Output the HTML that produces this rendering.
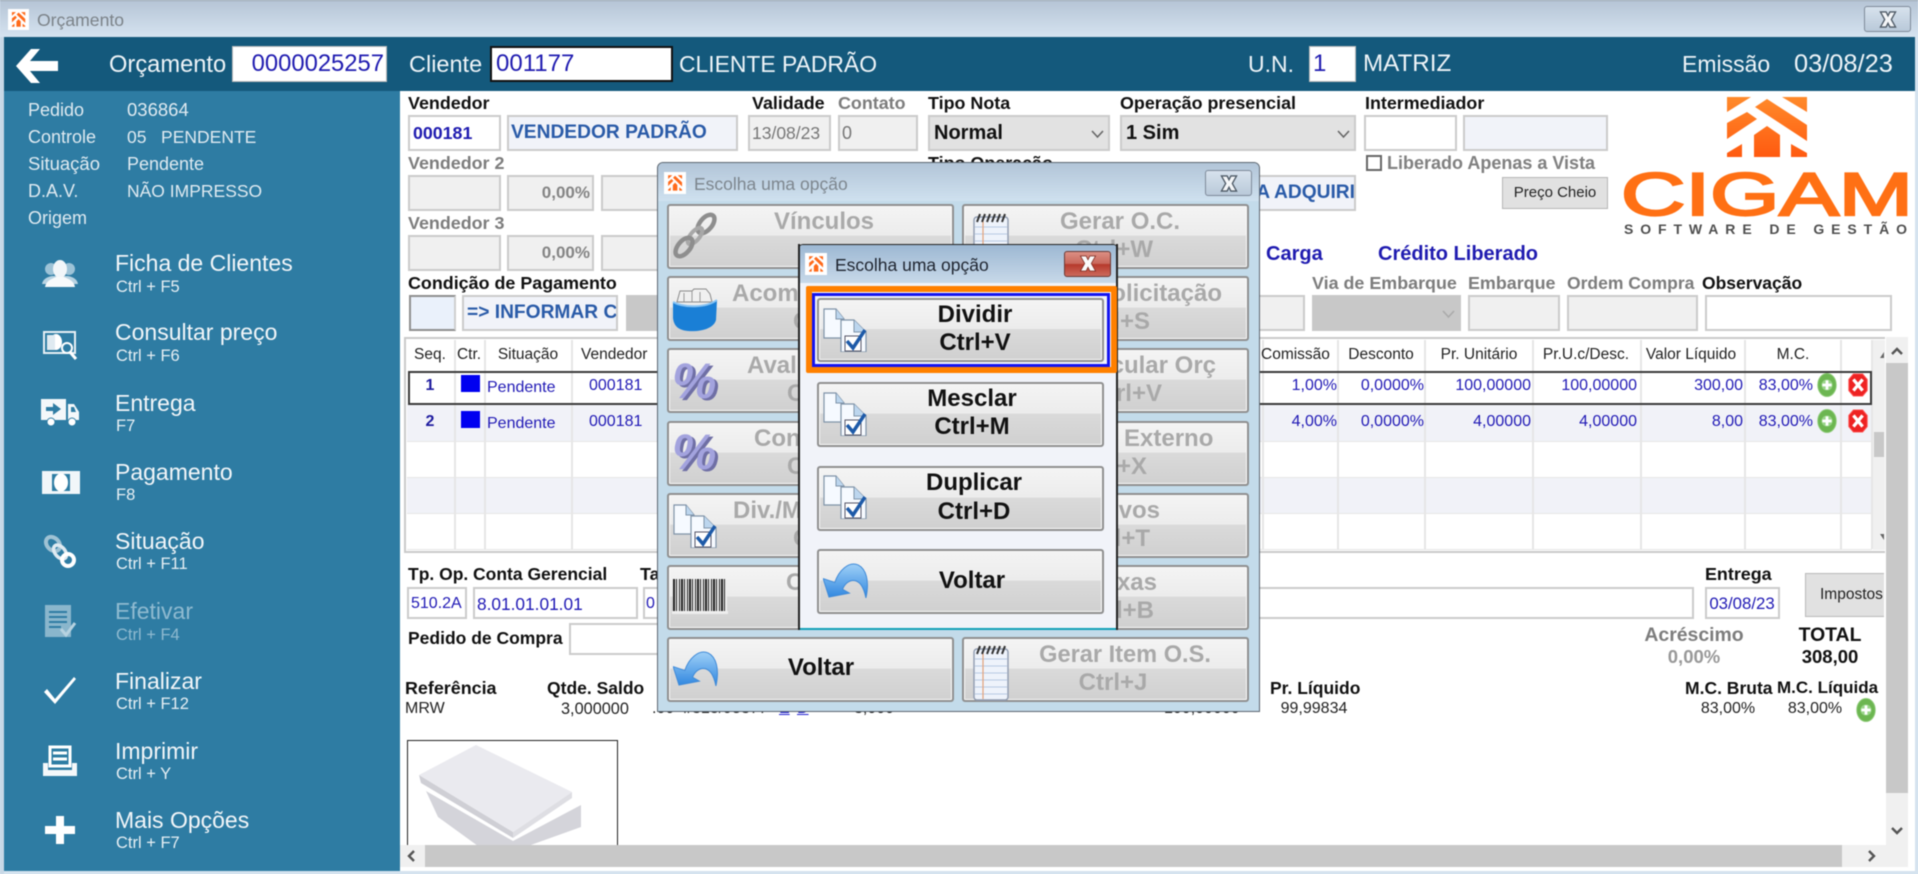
<!DOCTYPE html>
<html lang="pt"><head><meta charset="utf-8"><title>Orçamento</title>
<style>
html,body{margin:0;padding:0;width:1918px;height:874px;overflow:hidden;background:#d5e3ef}
body{font-family:"Liberation Sans",Arial,sans-serif;position:relative}
#w{position:absolute;left:0;top:0;width:1918px;height:874px;overflow:hidden;filter:blur(.45px)}
.a{position:absolute}
.t{position:absolute;white-space:nowrap;line-height:20px;height:20px}
.c{transform:translateX(-50%)}
.r{text-align:right;transform:translateX(-100%)}
.w{color:#eef4f8}
.s18{font-size:18px;color:#dfeaf1}
.m{font-size:23px;color:#f2f6f9}
.k{font-size:16.5px;color:#e6eff4}
.l{font-size:17.9px;font-weight:bold;color:#111}
.n{font-size:17.5px}
.g{color:#7d7d7d}
.b{position:absolute;box-sizing:border-box;border:2px solid #cbcbcb;background:#fff}
.d{background:#f0f0f0}
.e{background:#f1f3f9}
.v{font-size:16px;color:#2019b5}
.h{font-size:15.5px;color:#222}
.vl{position:absolute;width:2px;background:#e6e6e6;top:340px;height:209px}
.btn{position:absolute;box-sizing:border-box;border:2px solid #8f8f8f;border-radius:3px;box-shadow:inset 0 0 0 1px #fafafa;background:linear-gradient(#f4f4f4 0,#ececec 48%,#dadada 49%,#d0d0d0 100%)}
.x{font-size:24px;font-weight:bold;color:#a9a9a9;line-height:28px;height:28px}
.y{font-size:24px;font-weight:bold;color:#111;line-height:28px;height:28px}
svg{position:absolute;overflow:visible}
</style></head><body><div id="w">

<svg width="0" height="0" style="left:0;top:0">
<defs>
<linearGradient id="org" x1="0" y1="0" x2="0" y2="1"><stop offset="0" stop-color="#ff8a2a"/><stop offset="1" stop-color="#ff5a10"/></linearGradient>
<linearGradient id="blu" x1="0" y1="0" x2="0" y2="1"><stop offset="0" stop-color="#9fd0f7"/><stop offset="1" stop-color="#2f86df"/></linearGradient>
<symbol id="ic" viewBox="0 0 24 24"><rect x="0" y="0" width="24" height="24" fill="#fff"/><g transform="translate(4.5 3.5) scale(.19 .28)" fill="#ff6a1a"><path d="M0 0H24L0 15ZM55 0H80V15ZM0 26 20 15 30 22 0 42ZM28 10 40 2 80 28V44ZM40 29 53 38V60H27V38ZM0 60H15V47L0 56ZM64 47 80 56V60H64Z"/></g></symbol>
<symbol id="xx" viewBox="0 0 20 18"><path d="M2 1H8L10 5 12 1H18L13.5 9 18 17H12L10 13 8 17H2L6.5 9Z" fill="#f4f6f8" stroke="#4e5a66" stroke-width="1.4"/></symbol>
<symbol id="xw" viewBox="0 0 20 18"><path d="M2 1H8L10 5 12 1H18L13.5 9 18 17H12L10 13 8 17H2L6.5 9Z" fill="#fafafa" stroke="#7a2a20" stroke-width=".8"/></symbol>
<symbol id="doc" viewBox="0 0 44 44">
<path d="M1 1H13L21 11V30H1Z" fill="#f6faff" stroke="#7f93a8" stroke-width="1.2"/><path d="M13 1V11H21" fill="#bcd6ee" stroke="#7f93a8"/>
<path d="M18 12H31L43 24V44H18Z" fill="#f6faff" stroke="#7f93a8" stroke-width="1.2"/><path d="M31 12V24H43" fill="#bcd6ee" stroke="#7f93a8"/>
<rect x="22" y="28" width="16" height="15" fill="#fff" stroke="#556" stroke-width="1"/><path d="M24 33 30 40 42 22" fill="none" stroke="#1d5aa8" stroke-width="3.5"/></symbol>
<symbol id="und" viewBox="0 0 46 36"><path d="M0 16 12 20C16 8 26-2 36 2 44 6 48 18 44 36 42 26 38 18 31 18 26 18 22 22 20 27L27 31 6 35Z" fill="url(#blu)" stroke="#3f8ad8" stroke-width="1"/></symbol>
<symbol id="note" viewBox="0 0 36 56"><rect x="1" y="4" width="34" height="51" rx="3" fill="#eef3fb" stroke="#8f9bb0" stroke-width="1.4"/><path d="M2 14H34M2 21H34M2 28H34M2 35H34M2 42H34M2 49H34" stroke="#b7c8e2"/><path d="M10 6V54" stroke="#e3a27a" stroke-width="1.2"/><path d="M4 9 7 1M9 9 12 1M14 9 17 1M19 9 22 1M24 9 27 1M29 9 32 1" stroke="#333" stroke-width="2"/></symbol>
<symbol id="pl" viewBox="0 0 22 26"><ellipse cx="11" cy="13" rx="10" ry="12.5" fill="#6cb651" stroke="#8ecb78"/><circle cx="11" cy="13" r="6" fill="#9ad58a"/><path d="M11 8V18M6 13H16" stroke="#fff" stroke-width="3"/></symbol>
<symbol id="rd" viewBox="0 0 22 26"><path d="M6 1H16L21 7V19L16 25H6L1 19V7Z" fill="#ee2222" stroke="#f55"/><path d="M6 7 16 19M16 7 6 19" stroke="#fff" stroke-width="3.5"/></symbol>
</defs></svg>

<!-- title bar -->
<div class="a" style="left:0;top:0;width:1918px;height:37px;background:linear-gradient(#b6c5d6,#d5e3f0);border-top:1px solid #9aa5b0;box-sizing:border-box"></div>
<svg style="left:8px;top:9px" width="21" height="21"><use href="#ic" width="21" height="21"/></svg>
<div class="t" style="left:37px;top:10px;font-size:17.6px;color:#7b8288">Orçamento</div>
<div class="a" style="left:1864px;top:6px;width:47px;height:26px;box-sizing:border-box;border:1px solid #7e8a99;border-radius:3px;background:linear-gradient(#d7e2ed,#b9c9d9)"></div>
<svg style="left:1878px;top:11px" width="20" height="17"><use href="#xx" width="20" height="17"/></svg>

<!-- frame -->
<div class="a" style="left:0;top:37px;width:4px;height:837px;background:#c8d8e6"></div>
<!-- header -->
<div class="a" style="left:4px;top:37px;width:1911px;height:54px;background:#14597c"></div>
<svg style="left:16px;top:49px" width="42" height="34" viewBox="0 0 42 34"><path d="M0 17 15 0H24L14 12H42V22H14L24 34H15Z" fill="#fff"/></svg>
<div class="t w" style="left:109px;top:55px;font-size:23.7px">Orçamento</div>
<div class="a" style="left:232px;top:46px;width:155px;height:36px;background:#fff;border:1px solid #bbb;box-sizing:border-box"></div>
<div class="t r" style="left:384px;top:54px;font-size:23.8px;color:#1f1bb0">0000025257</div>
<div class="t w" style="left:409px;top:54px;font-size:23.5px">Cliente</div>
<div class="a" style="left:490px;top:46px;width:183px;height:36px;background:#fff;border:2px solid #111;box-sizing:border-box"></div>
<div class="t" style="left:496px;top:54px;font-size:24px;color:#1f1bb0">001177</div>
<div class="t w" style="left:679px;top:54px;font-size:22.9px">CLIENTE PADRÃO</div>
<div class="t w" style="left:1248px;top:54px;font-size:23px">U.N.</div>
<div class="a" style="left:1309px;top:46px;width:47px;height:36px;background:#fff;border:1px solid #bbb;box-sizing:border-box"></div>
<div class="t" style="left:1313px;top:54px;font-size:24px;color:#1f1bb0">1</div>
<div class="t w" style="left:1363px;top:54px;font-size:24.2px">MATRIZ</div>
<div class="t w" style="left:1682px;top:54px;font-size:23px">Emissão</div>
<div class="t w" style="left:1794px;top:54px;font-size:25.4px">03/08/23</div>

<!-- sidebar -->
<div class="a" style="left:4px;top:91px;width:396px;height:780px;background:#2e7ca3"></div>
<div class="t s18" style="left:28px;top:100px">Pedido</div><div class="t s18" style="left:127px;top:100px;font-size:18.5px">036864</div>
<div class="t s18" style="left:28px;top:127px">Controle</div><div class="t s18" style="left:127px;top:127px;font-size:17.5px">05 &nbsp; PENDENTE</div>
<div class="t s18" style="left:28px;top:154px;font-size:18.5px">Situação</div><div class="t s18" style="left:127px;top:154px">Pendente</div>
<div class="t s18" style="left:28px;top:181px">D.A.V.</div><div class="t s18" style="left:127px;top:181px;font-size:17.5px">NÃO IMPRESSO</div>
<div class="t s18" style="left:28px;top:208px">Origem</div>

<div class="t m" style="left:115px;top:253px">Ficha de Clientes</div><div class="t k" style="left:116px;top:277px">Ctrl + F5</div>
<div class="t m" style="left:115px;top:322px">Consultar preço</div><div class="t k" style="left:116px;top:346px">Ctrl + F6</div>
<div class="t m" style="left:115px;top:393px">Entrega</div><div class="t k" style="left:116px;top:416px">F7</div>
<div class="t m" style="left:115px;top:462px">Pagamento</div><div class="t k" style="left:116px;top:485px">F8</div>
<div class="t m" style="left:115px;top:531px">Situação</div><div class="t k" style="left:116px;top:554px">Ctrl + F11</div>
<div class="t m" style="left:115px;top:601px;color:#8fbad0">Efetivar</div><div class="t k" style="left:116px;top:625px;color:#8fbad0">Ctrl + F4</div>
<div class="t m" style="left:115px;top:671px">Finalizar</div><div class="t k" style="left:116px;top:694px">Ctrl + F12</div>
<div class="t m" style="left:115px;top:741px">Imprimir</div><div class="t k" style="left:116px;top:764px">Ctrl + Y</div>
<div class="t m" style="left:115px;top:810px">Mais Opções</div><div class="t k" style="left:116px;top:833px">Ctrl + F7</div>

<svg style="left:42px;top:260px" width="36" height="27" viewBox="0 0 36 27"><circle cx="9" cy="9" r="6" fill="#9dc3d7"/><circle cx="27" cy="9" r="6" fill="#9dc3d7"/><path d="M0 24C1 19 5 17 10 16H26C31 17 35 19 36 24Z" fill="#b7d3e2"/><ellipse cx="18" cy="9" rx="7" ry="9" fill="#f1f6f9"/><path d="M3 27C4 21 9 19 14 17H22C27 19 32 21 33 27Z" fill="#f7fafb"/></svg>
<svg style="left:43px;top:331px" width="34" height="28" viewBox="0 0 34 28"><rect x="1" y="1" width="31" height="21" fill="none" stroke="#e8f0f5" stroke-width="2"/><ellipse cx="13" cy="11" rx="6" ry="8" fill="#fff"/><rect x="4" y="4" width="8" height="15" fill="#dfeaf1"/><circle cx="24" cy="17" r="5" fill="#2e7ca3" stroke="#fff" stroke-width="2"/><path d="M27 21 33 28" stroke="#fff" stroke-width="3"/></svg>
<svg style="left:41px;top:399px" width="38" height="28" viewBox="0 0 38 28"><rect x="0" y="0" width="25" height="21" fill="#f4f8fa"/><path d="M27 5H33L38 13V21H27Z" fill="#f4f8fa"/><path d="M30 8H33L35 13H30Z" fill="#2e7ca3"/><path d="M5 8H12V4L20 10 12 16V12H5Z" fill="#2e7ca3"/><circle cx="10" cy="23" r="4" fill="#fff" stroke="#2e7ca3"/><circle cx="31" cy="23" r="4" fill="#fff" stroke="#2e7ca3"/></svg>
<svg style="left:42px;top:471px" width="38" height="23" viewBox="0 0 38 23"><rect x="0" y="0" width="38" height="23" fill="#f1f6f9"/><rect x="3" y="3" width="32" height="17" fill="#2e7ca3"/><ellipse cx="19" cy="11.5" rx="7" ry="9" fill="#fff"/><rect x="3" y="3" width="7" height="17" fill="#f1f6f9"/><rect x="28" y="3" width="7" height="17" fill="#f1f6f9"/></svg>
<svg style="left:44px;top:535px" width="33" height="33" viewBox="0 0 33 33" fill="none"><ellipse cx="9" cy="9" rx="8" ry="6" transform="rotate(45 9 9)" stroke="#9fc2d4" stroke-width="4"/><ellipse cx="16" cy="17" rx="8" ry="5" transform="rotate(50 16 17)" stroke="#dfeaf1" stroke-width="3.5"/><circle cx="24" cy="25" r="6" stroke="#fff" stroke-width="4"/></svg>
<svg style="left:45px;top:605px" width="30" height="33" viewBox="0 0 30 33"><rect x="0" y="0" width="26" height="32" fill="#8ab6cc"/><path d="M4 7H22M4 12H22M4 17H22M4 22H16" stroke="#2e7ca3" stroke-width="2"/><path d="M16 24 21 30 30 18" fill="none" stroke="#b6d2e0" stroke-width="3"/></svg>
<svg style="left:44px;top:677px" width="32" height="27" viewBox="0 0 32 27"><path d="M0 15 3 12 11 22 30 0 32 2 11 27Z" fill="#fff"/></svg>
<svg style="left:43px;top:746px" width="34" height="30" viewBox="0 0 34 30"><path d="M7 1H27V20H7Z" fill="none" stroke="#fff" stroke-width="3"/><path d="M10 7H24M10 13H24" stroke="#fff" stroke-width="3"/><path d="M0 17H5V24H29V17H34V30H0Z" fill="#f4f8fa"/></svg>
<svg style="left:45px;top:816px" width="30" height="28" viewBox="0 0 30 28"><path d="M11 0H19V10H30V18H19V28H11V18H0V10H11Z" fill="#fff"/></svg>

<!-- content -->
<div class="a" style="left:400px;top:91px;width:1515px;height:780px;background:#fff"></div>

<div class="t l" style="left:408px;top:93px">Vendedor</div>
<div class="t l" style="left:752px;top:93px">Validade</div>
<div class="t l g" style="left:838px;top:93px">Contato</div>
<div class="t l" style="left:928px;top:93px">Tipo Nota</div>
<div class="t l" style="left:1120px;top:93px">Operação presencial</div>
<div class="t l" style="left:1365px;top:93px">Intermediador</div>

<div class="b" style="left:408px;top:115px;width:93px;height:36px"></div>
<div class="t" style="left:413px;top:123px;font-size:17.8px;font-weight:bold;color:#1f1bb0">000181</div>
<div class="b e" style="left:507px;top:115px;width:231px;height:36px"></div>
<div class="t" style="left:511px;top:123px;font-size:19.2px;font-weight:bold;color:#2a5ba8">VENDEDOR PADRÃO</div>
<div class="b d" style="left:748px;top:115px;width:83px;height:36px"></div>
<div class="t" style="left:752px;top:123px;font-size:17.5px;color:#777">13/08/23</div>
<div class="b d" style="left:838px;top:115px;width:80px;height:36px"></div>
<div class="t" style="left:842px;top:123px;font-size:18px;color:#777">0</div>
<div class="b" style="left:928px;top:115px;width:182px;height:36px;background:#e2e2e2"></div>
<div class="t" style="left:934px;top:123px;font-size:20px;font-weight:bold;color:#111">Normal</div>
<svg style="left:1091px;top:130px" width="13" height="8"><path d="M1 1 6.5 7 12 1" fill="none" stroke="#666" stroke-width="1.6"/></svg>
<div class="b" style="left:1120px;top:115px;width:236px;height:36px;background:#e2e2e2"></div>
<div class="t" style="left:1126px;top:123px;font-size:20px;font-weight:bold;color:#111">1 Sim</div>
<svg style="left:1337px;top:130px" width="13" height="8"><path d="M1 1 6.5 7 12 1" fill="none" stroke="#666" stroke-width="1.6"/></svg>
<div class="b" style="left:1364px;top:115px;width:93px;height:36px"></div>
<div class="b e" style="left:1463px;top:115px;width:145px;height:36px"></div>

<div class="t l g" style="left:408px;top:153px">Vendedor 2</div>
<div class="t l" style="left:928px;top:153px">Tipo Operação</div>
<div class="a" style="left:1366px;top:155px;width:16px;height:16px;box-sizing:border-box;border:2px solid #666;background:#fff"></div>
<div class="t" style="left:1387px;top:153px;font-size:18px;font-weight:bold;color:#808080">Liberado Apenas a Vista</div>

<div class="b d" style="left:408px;top:175px;width:93px;height:36px"></div>
<div class="b d" style="left:507px;top:175px;width:87px;height:36px"></div>
<div class="t r" style="left:590px;top:183px;font-size:17px;font-weight:bold;color:#858585">0,00%</div>
<div class="b d" style="left:601px;top:175px;width:100px;height:36px"></div>
<div class="b e" style="left:1150px;top:175px;width:206px;height:36px"></div>
<div class="t r" style="left:1355px;top:183px;font-size:19.2px;font-weight:bold;color:#2a5ba8">A ADQUIRI</div>
<div class="a" style="left:1502px;top:177px;width:106px;height:32px;box-sizing:border-box;border:1px solid #b5b5b5;background:#e1e1e1"></div>
<div class="t c" style="left:1555px;top:183px;font-size:15px;color:#222">Preço Cheio</div>

<div class="t l g" style="left:408px;top:213px">Vendedor 3</div>
<div class="b d" style="left:408px;top:235px;width:93px;height:36px"></div>
<div class="b d" style="left:507px;top:235px;width:87px;height:36px"></div>
<div class="t r" style="left:590px;top:243px;font-size:17px;font-weight:bold;color:#858585">0,00%</div>
<div class="b d" style="left:601px;top:235px;width:100px;height:36px"></div>
<div class="t" style="left:1266px;top:244px;font-size:20px;font-weight:bold;color:#1f1bb0">Carga</div>
<div class="t" style="left:1378px;top:244px;font-size:20px;font-weight:bold;color:#1f1bb0">Crédito Liberado</div>

<!-- logo -->
<svg style="left:1727px;top:97px" width="80" height="60" viewBox="0 0 80 60">
<g fill="url(#org)"><path d="M0 0H24L0 15ZM55 0H80V15ZM0 26 20 15 30 22 0 42ZM28 10 40 2 80 28V44ZM40 29 53 38V60H27V38ZM0 60H15V47L0 56ZM64 47 80 56V60H64Z"/></g></svg>
<svg style="left:1626px;top:170px" width="283" height="68" viewBox="0 0 283 68">
<text x="-5" y="45" font-family="Liberation Sans" font-size="60" fill="#ff7014" stroke="#ff7014" stroke-width="2.2" textLength="292" lengthAdjust="spacingAndGlyphs">CIGAM</text>
<text x="-2" y="64" font-family="Liberation Sans" font-weight="bold" font-size="14" fill="#4f4f4f" textLength="283" lengthAdjust="spacing">SOFTWARE DE GESTÃO</text></svg>

<div class="t l" style="left:408px;top:273px">Condição de Pagamento</div>
<div class="t l g" style="left:1312px;top:273px">Via de Embarque</div>
<div class="t l g" style="left:1468px;top:273px">Embarque</div>
<div class="t l g n" style="left:1567px;top:273px">Ordem Compra</div>
<div class="t l n" style="left:1702px;top:273px">Observação</div>

<div class="b" style="left:409px;top:295px;width:47px;height:36px;background:#eaf1fb;border-color:#8f8f8f #cfcfcf #8f8f8f #8f8f8f"></div>
<div class="b e" style="left:462px;top:295px;width:156px;height:36px;overflow:hidden"><div class="t" style="left:3px;top:6px;font-size:19.2px;font-weight:bold;color:#2a5ba8">=&gt; INFORMAR CONDIÇÃO</div></div>
<div class="a" style="left:626px;top:295px;width:40px;height:36px;background:#c8c8c8"></div>
<div class="b d" style="left:1230px;top:295px;width:75px;height:36px"></div>
<div class="a" style="left:1312px;top:295px;width:149px;height:36px;background:#c8c8c8"></div>
<svg style="left:1442px;top:310px" width="13" height="8"><path d="M1 1 6.5 7 12 1" fill="none" stroke="#aaa" stroke-width="1.6"/></svg>
<div class="b d" style="left:1468px;top:295px;width:92px;height:36px"></div>
<div class="b d" style="left:1567px;top:295px;width:131px;height:36px"></div>
<div class="b" style="left:1705px;top:295px;width:187px;height:36px"></div>

<!-- grid -->
<div class="a" style="left:404px;top:337px;width:1481px;height:216px;box-sizing:border-box;border:2px solid #cacaca;border-right:0"></div>
<div class="a" style="left:407px;top:404px;width:1465px;height:37px;background:#f1f2f8"></div>
<div class="a" style="left:407px;top:477px;width:1465px;height:36px;background:#f1f2f8"></div>
<div class="a" style="left:407px;top:441px;width:1465px;height:1px;background:#e6e6e6"></div>
<div class="a" style="left:407px;top:477px;width:1465px;height:1px;background:#e6e6e6"></div>
<div class="a" style="left:407px;top:513px;width:1465px;height:1px;background:#e6e6e6"></div>
<div class="a" style="left:407px;top:549px;width:1465px;height:1px;background:#e6e6e6"></div>
<div class="vl" style="left:454px"></div><div class="vl" style="left:484px"></div><div class="vl" style="left:571px"></div><div class="vl" style="left:665px"></div><div class="vl" style="left:1262px"></div><div class="vl" style="left:1337px"></div><div class="vl" style="left:1424px"></div><div class="vl" style="left:1532px"></div><div class="vl" style="left:1640px"></div><div class="vl" style="left:1744px"></div><div class="vl" style="left:1840px"></div><div class="vl" style="left:1871px"></div>
<div class="a" style="left:408px;top:371px;width:1464px;height:34px;box-sizing:border-box;border:2px solid #3a3a3a"></div>

<div class="t h c" style="left:430px;top:345px">Seq.</div><div class="t h c" style="left:469px;top:345px">Ctr.</div><div class="t h c" style="left:528px;top:345px">Situação</div><div class="t h" style="left:581px;top:345px">Vendedor</div>
<div class="t h" style="left:1261px;top:345px">Comissão</div><div class="t h c" style="left:1381px;top:345px">Desconto</div><div class="t h c" style="left:1479px;top:345px">Pr. Unitário</div><div class="t h c" style="left:1586px;top:345px">Pr.U.c/Desc.</div><div class="t h c" style="left:1691px;top:345px">Valor Líquido</div><div class="t h c" style="left:1793px;top:345px">M.C.</div>

<div class="t c" style="left:430px;top:376px;font-size:16px;font-weight:bold;color:#1d1a9e">1</div>
<div class="a" style="left:461px;top:375px;width:19px;height:17px;background:#0000f0"></div>
<div class="t v" style="left:487px;top:378px">Pendente</div><div class="t v" style="left:589px;top:376px">000181</div>
<div class="t v r" style="left:1337px;top:376px">1,00%</div><div class="t v r" style="left:1424px;top:376px">0,0000%</div><div class="t v r" style="left:1531px;top:376px">100,00000</div><div class="t v r" style="left:1637px;top:376px">100,00000</div><div class="t v r" style="left:1743px;top:376px">300,00</div><div class="t v r" style="left:1813px;top:376px">83,00%</div>
<svg style="left:1816px;top:373px" width="22" height="24"><use href="#pl" width="22" height="24"/></svg>
<svg style="left:1847px;top:373px" width="22" height="24"><use href="#rd" width="22" height="24"/></svg>

<div class="t c" style="left:430px;top:412px;font-size:16px;font-weight:bold;color:#1d1a9e">2</div>
<div class="a" style="left:461px;top:411px;width:19px;height:17px;background:#0000f0"></div>
<div class="t v" style="left:487px;top:414px">Pendente</div><div class="t v" style="left:589px;top:412px">000181</div>
<div class="t v r" style="left:1337px;top:412px">4,00%</div><div class="t v r" style="left:1424px;top:412px">0,0000%</div><div class="t v r" style="left:1531px;top:412px">4,00000</div><div class="t v r" style="left:1637px;top:412px">4,00000</div><div class="t v r" style="left:1743px;top:412px">8,00</div><div class="t v r" style="left:1813px;top:412px">83,00%</div>
<svg style="left:1816px;top:409px" width="22" height="24"><use href="#pl" width="22" height="24"/></svg>
<svg style="left:1847px;top:409px" width="22" height="24"><use href="#rd" width="22" height="24"/></svg>

<!-- inner grid scrollbar -->
<div class="a" style="left:1873px;top:340px;width:12px;height:210px;background:#f0f0f0"></div>
<div class="a" style="left:1874px;top:432px;width:10px;height:25px;background:#c8c8c8"></div>
<svg style="left:1880px;top:351px" width="5" height="8"><path d="M0 7 4 1V7Z" fill="#666"/></svg>
<svg style="left:1880px;top:533px" width="5" height="8"><path d="M0 1 4 7V1Z" fill="#666"/></svg>
<!-- outer scrollbars -->
<div class="a" style="left:1886px;top:337px;width:22px;height:508px;background:#f0f0f0"></div>
<div class="a" style="left:1886px;top:363px;width:22px;height:430px;background:#c8c8c8"></div>
<svg style="left:1891px;top:347px" width="12" height="8"><path d="M1 7 6 2 11 7" fill="none" stroke="#555" stroke-width="2.4"/></svg>
<svg style="left:1891px;top:827px" width="12" height="8"><path d="M1 1 6 6 11 1" fill="none" stroke="#555" stroke-width="2.4"/></svg>
<div class="a" style="left:400px;top:845px;width:1508px;height:22px;background:#f0f0f0"></div>
<div class="a" style="left:425px;top:845px;width:1417px;height:22px;background:#c8c8c8"></div>
<svg style="left:407px;top:850px" width="8" height="12"><path d="M7 1 2 6 7 11" fill="none" stroke="#555" stroke-width="2.4"/></svg>
<svg style="left:1868px;top:850px" width="8" height="12"><path d="M1 1 6 6 1 11" fill="none" stroke="#555" stroke-width="2.4"/></svg>

<!-- lower -->
<div class="t l n" style="left:408px;top:564px">Tp. Op.</div>
<div class="t l n" style="left:473px;top:564px">Conta Gerencial</div>
<div class="t l" style="left:640px;top:564px">Tabela</div>
<div class="t l" style="left:1705px;top:564px">Entrega</div>
<div class="b" style="left:407px;top:587px;width:60px;height:32px"></div>
<div class="t v" style="left:411px;top:594px">510.2A</div>
<div class="b" style="left:473px;top:587px;width:165px;height:32px"></div>
<div class="t v" style="left:477px;top:594px;font-size:17.3px">8.01.01.01.01</div>
<div class="b" style="left:643px;top:587px;width:80px;height:32px"></div>
<div class="t v" style="left:646px;top:594px">0</div>
<div class="b" style="left:1100px;top:587px;width:594px;height:32px"></div>
<div class="b" style="left:1705px;top:587px;width:75px;height:32px"></div>
<div class="t c" style="left:1742px;top:594px;font-size:16.8px;color:#2019b5">03/08/23</div>
<div class="a" style="left:1805px;top:573px;width:79px;height:44px;box-sizing:border-box;border:1px solid #b8b8b8;border-right:0;background:#e1e1e1"></div>
<div class="a" style="left:1805px;top:573px;width:79px;height:44px;overflow:hidden"><div class="t" style="left:15px;top:12px;font-size:15.5px;color:#222">Impostos</div></div>

<div class="t l n" style="left:408px;top:628px">Pedido de Compra</div>
<div class="b" style="left:569px;top:623px;width:100px;height:32px"></div>
<div class="t c" style="left:1694px;top:625px;font-size:19.4px;font-weight:bold;color:#7d7d7d">Acréscimo</div>
<div class="t c" style="left:1694px;top:647px;font-size:18.5px;font-weight:bold;color:#999">0,00%</div>
<div class="t c" style="left:1830px;top:625px;font-size:19.4px;font-weight:bold;color:#111">TOTAL</div>
<div class="t c" style="left:1830px;top:647px;font-size:18.5px;font-weight:bold;color:#111">308,00</div>

<div class="t l" style="left:405px;top:678px">Referência</div>
<div class="t" style="left:405px;top:699px;font-size:16px;color:#222">MRW</div>
<div class="t l n" style="left:547px;top:678px">Qtde. Saldo</div>
<div class="t" style="left:561px;top:699px;font-size:16.3px;color:#222">3,000000</div>
<div class="t" style="left:652px;top:699px;font-size:16px;color:#222">.00 4/318/95377</div>
<div class="t" style="left:779px;top:699px;font-size:16px;color:#2222d0;text-decoration:underline">E</div>
<div class="t" style="left:797px;top:699px;font-size:16px;color:#2222d0;text-decoration:underline">D</div>
<div class="t" style="left:854px;top:699px;font-size:16px;color:#222">3,000</div>
<div class="t" style="left:1164px;top:699px;font-size:16px;color:#222">100,00000</div>
<div class="t l n" style="left:1270px;top:678px">Pr. Líquido</div>
<div class="t c" style="left:1314px;top:699px;font-size:16px;color:#222">99,99834</div>
<div class="t l n" style="left:1685px;top:678px">M.C. Bruta</div>
<div class="t l" style="left:1777px;top:678px;font-size:17px">M.C. Líquida</div>
<div class="t c" style="left:1728px;top:699px;font-size:16px;color:#222">83,00%</div>
<div class="t c" style="left:1815px;top:699px;font-size:16px;color:#222">83,00%</div>
<svg style="left:1855px;top:698px" width="22" height="24"><use href="#pl" width="22" height="24"/></svg>

<div class="a" style="left:407px;top:740px;width:211px;height:105px;box-sizing:border-box;border:1px solid #222;border-bottom:0;background:#fff;overflow:hidden">
<svg style="left:0;top:0" width="209" height="105" viewBox="0 0 209 105"><path d="M18 50 105 100 173 64V86L120 105H70L30 76Z" fill="#d4d4da"/><path d="M11 34 105 91V97L13 42Z" fill="#cfcfd5"/><path d="M105 91 164 51V57L105 97Z" fill="#dedee3"/><path d="M11 34 68 4 164 51 105 91Z" fill="#eaeaef"/></svg></div>

<!-- dialog 1 -->
<div class="a" style="left:657px;top:162px;width:603px;height:550px;box-sizing:border-box;border:1px solid #5c6670;border-radius:6px 6px 0 0;background:#c3dbea;overflow:hidden">
<div class="a" style="left:0;top:0;width:601px;height:38px;background:linear-gradient(#b2c5d8,#cfe1ef)"></div>
</div>
<svg style="left:664px;top:172px" width="22" height="22"><use href="#ic" width="22" height="22"/></svg>
<div class="t" style="left:694px;top:174px;font-size:17.5px;color:#7d868e">Escolha uma opção</div>
<div class="a" style="left:1205px;top:170px;width:47px;height:26px;box-sizing:border-box;border:1px solid #7e8a99;border-radius:3px;background:linear-gradient(#d7e2ed,#b9c9d9)"></div>
<svg style="left:1219px;top:175px" width="20" height="17"><use href="#xx" width="20" height="17"/></svg>

<div class="btn" style="left:667px;top:204px;width:287px;height:65px"></div>
<div class="btn" style="left:962px;top:204px;width:287px;height:65px"></div>
<div class="btn" style="left:667px;top:276px;width:287px;height:65px"></div>
<div class="btn" style="left:962px;top:276px;width:287px;height:65px"></div>
<div class="btn" style="left:667px;top:348px;width:287px;height:65px"></div>
<div class="btn" style="left:962px;top:348px;width:287px;height:65px"></div>
<div class="btn" style="left:667px;top:421px;width:287px;height:65px"></div>
<div class="btn" style="left:962px;top:421px;width:287px;height:65px"></div>
<div class="btn" style="left:667px;top:493px;width:287px;height:65px"></div>
<div class="btn" style="left:962px;top:493px;width:287px;height:65px"></div>
<div class="btn" style="left:667px;top:565px;width:287px;height:65px"></div>
<div class="btn" style="left:962px;top:565px;width:287px;height:65px"></div>
<div class="btn" style="left:667px;top:637px;width:287px;height:65px"></div>
<div class="btn" style="left:962px;top:637px;width:287px;height:65px"></div>

<div class="t x c" style="left:824px;top:208px">Vínculos</div>
<div class="t x c" style="left:1120px;top:208px">Gerar O.C.</div>
<div class="t x c" style="left:1114px;top:236px">Ctrl+W</div>
<div class="t x" style="left:732px;top:280px">Acompanhar</div><div class="t x" style="left:793px;top:308px">C</div>
<div class="t x r" style="left:1222px;top:280px">Solicitação</div><div class="t x r" style="left:1150px;top:308px">Ctrl+S</div>
<div class="t x" style="left:747px;top:352px">Avaliar</div><div class="t x" style="left:787px;top:380px">C</div>
<div class="t x r" style="left:1216px;top:352px">Calcular Orç</div><div class="t x r" style="left:1162px;top:380px">Ctrl+V</div>
<div class="t x" style="left:754px;top:425px">Con</div><div class="t x" style="left:787px;top:453px">C</div>
<div class="t x" style="left:1124px;top:425px">Externo</div><div class="t x r" style="left:1147px;top:453px">Ctrl+X</div>
<div class="t x" style="left:733px;top:497px">Div./Mes</div><div class="t x" style="left:793px;top:525px">C</div>
<div class="t x r" style="left:1160px;top:497px">Arquivos</div><div class="t x r" style="left:1150px;top:525px">Ctrl+T</div>
<div class="t x" style="left:786px;top:569px">Código</div>
<div class="t x r" style="left:1157px;top:569px">Caixas</div><div class="t x r" style="left:1154px;top:597px">Ctrl+B</div>
<div class="t y c" style="left:821px;top:654px">Voltar</div>
<div class="t x c" style="left:1125px;top:641px;font-size:23.6px">Gerar Item O.S.</div><div class="t x c" style="left:1113px;top:669px">Ctrl+J</div>

<!-- dialog1 icons -->
<svg style="left:673px;top:212px" width="44" height="46" viewBox="0 0 44 46" fill="none"><ellipse cx="33" cy="12" rx="11" ry="6" transform="rotate(-50 33 12)" stroke="#8e8e8e" stroke-width="4.5"/><ellipse cx="22" cy="24" rx="10" ry="4.5" transform="rotate(-50 22 24)" stroke="#a8a8a8" stroke-width="4"/><ellipse cx="11" cy="35" rx="11" ry="6" transform="rotate(-50 11 35)" stroke="#8e8e8e" stroke-width="4.5"/></svg>
<svg style="left:973px;top:213px" width="36" height="56"><use href="#note" width="36" height="56"/></svg>
<svg style="left:672px;top:288px" width="46" height="44" viewBox="0 0 46 44"><path d="M5 14 8 3H20L22 1H34L38 6 40 14Z" fill="#f0f0f0" stroke="#8a8a8a"/><path d="M12 14V5M20 14V3M28 14V4" stroke="#999"/><path d="M1 14C12 20 34 20 45 12L44 32C42 40 30 44 16 43 6 42 2 38 1 30Z" fill="#1a7fd6"/><path d="M1 14C12 20 34 20 45 12" fill="none" stroke="#86c3f4" stroke-width="2"/></svg>
<div class="t" style="left:672px;top:360px;height:42px;line-height:42px;font-size:50px;font-weight:bold;font-style:italic;color:#a3a3de;text-shadow:3px 2px 0 #6f6fa5">%</div>
<div class="t" style="left:672px;top:431px;height:42px;line-height:42px;font-size:50px;font-weight:bold;font-style:italic;color:#a3a3de;text-shadow:3px 2px 0 #6f6fa5">%</div>
<svg style="left:673px;top:504px" width="44" height="44"><use href="#doc" width="44" height="44"/></svg>
<div class="a" style="left:673px;top:579px;width:54px;height:32px;background:repeating-linear-gradient(90deg,#222 0 2px,#eee 2px 3px,#222 3px 4px,#eee 4px 6px,#222 6px 7px,#eee 7px 8px)"></div>
<div class="a" style="left:672px;top:611px;width:56px;height:3px;background:#eee"></div>
<svg style="left:673px;top:651px" width="45" height="35"><use href="#und" width="45" height="35"/></svg>
<svg style="left:973px;top:645px" width="36" height="56"><use href="#note" width="36" height="56"/></svg>

<!-- dialog 2 -->
<div class="a" style="left:798px;top:244px;width:320px;height:386px;box-sizing:border-box;border:1px solid #222;border-bottom:2px solid #13a0b8;border-right:1px solid #444;border-radius:5px 5px 0 0;background:#f1f3f9;overflow:hidden">
<div class="a" style="left:0;top:0;width:318px;height:38px;background:linear-gradient(#9db8d3,#c8d9e9)"></div>
</div>
<div class="a" style="left:1116px;top:244px;width:2px;height:386px;background:#222"></div>
<div class="a" style="left:798px;top:244px;width:2px;height:386px;background:#222"></div>
<svg style="left:805px;top:253px" width="22" height="22"><use href="#ic" width="22" height="22"/></svg>
<div class="t" style="left:835px;top:255px;font-size:17.5px;color:#1f2530">Escolha uma opção</div>
<div class="a" style="left:1064px;top:251px;width:47px;height:26px;box-sizing:border-box;border:1px solid #6a3a36;border-radius:3px;background:linear-gradient(#dc8f84 0,#c9685c 48%,#b6392b 52%,#cc6a5d 100%)"></div>
<svg style="left:1078px;top:255px" width="20" height="17"><use href="#xw" width="20" height="17"/></svg>

<div class="a" style="left:806px;top:286px;width:311px;height:87px;box-sizing:border-box;border:6px solid #ff8000;border-radius:2px;background:#fff"></div>
<div class="a" style="left:812px;top:293px;width:298px;height:74px;box-sizing:border-box;border:3px solid #1414f0;background:#f1f3f9"></div>
<div class="btn" style="left:817px;top:298px;width:287px;height:64px"></div>
<div class="btn" style="left:817px;top:382px;width:287px;height:65px"></div>
<div class="btn" style="left:817px;top:466px;width:287px;height:65px"></div>
<div class="btn" style="left:817px;top:549px;width:287px;height:65px"></div>

<div class="t y c" style="left:975px;top:301px">Dividir</div><div class="t y c" style="left:975px;top:329px">Ctrl+V</div>
<div class="t y c" style="left:972px;top:385px">Mesclar</div><div class="t y c" style="left:972px;top:413px">Ctrl+M</div>
<div class="t y c" style="left:974px;top:469px">Duplicar</div><div class="t y c" style="left:974px;top:498px">Ctrl+D</div>
<div class="t y c" style="left:972px;top:567px">Voltar</div>

<svg style="left:823px;top:308px" width="44" height="44"><use href="#doc" width="44" height="44"/></svg>
<svg style="left:823px;top:392px" width="44" height="44"><use href="#doc" width="44" height="44"/></svg>
<svg style="left:823px;top:475px" width="44" height="44"><use href="#doc" width="44" height="44"/></svg>
<svg style="left:823px;top:563px" width="45" height="35"><use href="#und" width="45" height="35"/></svg>

</div></body></html>
